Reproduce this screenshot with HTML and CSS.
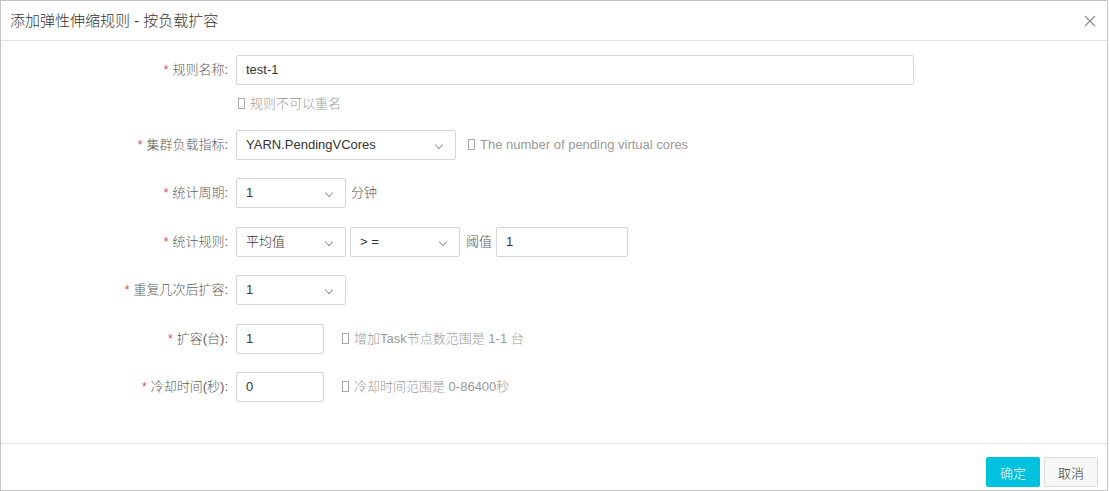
FILE: index.html
```html
<!DOCTYPE html>
<html lang="zh-CN">
<head>
  <meta charset="UTF-8">
  <title>添加弹性伸缩规则</title>
  <link rel="stylesheet" href="styles.css">
</head>
<body>
  <div class="dialog">
    <header class="dialog-header">
      <span class="dialog-title">添加弹性伸缩规则 - 按负载扩容</span>
      <button class="close-button" aria-label="关闭">
        <svg width="12" height="12" viewBox="0 0 12 12"><path d="M1 1 L11 11 M11 1 L1 11" stroke="#8c8c8c" stroke-width="1.2" fill="none"/></svg>
      </button>
    </header>

    <section class="dialog-body">
      <div class="form-row with-help">
        <label class="form-label"><span class="required">*</span>规则名称:</label>
        <div class="form-control">
          <div class="text-input name-input">test-1</div>
          <div class="help-block"><i class="help-icon"></i>规则不可以重名</div>
        </div>
      </div>

      <div class="form-row">
        <label class="form-label"><span class="required">*</span>集群负载指标:</label>
        <div class="select metric-select">YARN.PendingVCores<span class="chevron"></span></div>
        <span class="help-inline metric-help"><i class="help-icon"></i>The number of pending virtual cores</span>
      </div>

      <div class="form-row">
        <label class="form-label"><span class="required">*</span>统计周期:</label>
        <div class="select small-select">1<span class="chevron"></span></div>
        <span class="unit">分钟</span>
      </div>

      <div class="form-row">
        <label class="form-label"><span class="required">*</span>统计规则:</label>
        <div class="select small-select">平均值<span class="chevron"></span></div>
        <div class="select small-select next-select">&gt; =<span class="chevron"></span></div>
        <span class="unit threshold-label">阈值</span>
        <div class="text-input threshold-input">1</div>
      </div>

      <div class="form-row">
        <label class="form-label"><span class="required">*</span>重复几次后扩容:</label>
        <div class="select small-select">1<span class="chevron"></span></div>
      </div>

      <div class="form-row">
        <label class="form-label"><span class="required">*</span>扩容(台):</label>
        <div class="text-input short-input">1</div>
        <span class="help-inline"><i class="help-icon"></i>增加Task节点数范围是 1-1 台</span>
      </div>

      <div class="form-row">
        <label class="form-label"><span class="required">*</span>冷却时间(秒):</label>
        <div class="text-input short-input">0</div>
        <span class="help-inline"><i class="help-icon"></i>冷却时间范围是 0-86400秒</span>
      </div>
    </section>

    <footer class="dialog-footer">
      <button class="btn btn-primary">确定</button>
      <button class="btn btn-default">取消</button>
    </footer>
  </div>
</body>
</html>
```

FILE: styles.css
```css
body {
  margin: 0;
  padding: 0;
  background-color: #fff;
  font-family: "Liberation Sans", "Noto Sans CJK SC", sans-serif;
  font-size: 13px;
  font-weight: 300;
  color: #333;
}
.dialog {
  width: 1108px;
  height: 491px;
  box-sizing: border-box;
  border: 1px solid #c4c4c4;
  display: flex;
  flex-direction: column;
}
.dialog-header {
  height: 39px;
  border-bottom: 1px solid #e3e3e3;
  display: flex;
  align-items: center;
  justify-content: space-between;
  padding: 0 9px;
}
.dialog-title {
  font-size: 15px;
  color: #333;
  line-height: 20px;
}
.close-button {
  border: none;
  background: none;
  padding: 0;
  margin-right: 2px;
  width: 12px;
  height: 12px;
  display: flex;
  cursor: pointer;
}
.dialog-body {
  flex: 1;
  padding-top: 14px;
}
.form-row {
  display: flex;
  align-items: flex-start;
  margin-bottom: 18.4px;
}
.form-row.with-help {
  margin-bottom: 17px;
}
.form-label {
  width: 227px;
  margin-right: 8px;
  text-align: right;
  line-height: 30px;
  color: #5c5c5c;
  white-space: nowrap;
}
.required {
  color: #e64552;
  font-size: 12px;
  margin-right: 4px;
}
.text-input,
.select {
  height: 30px;
  box-sizing: border-box;
  border: 1px solid #d6d6d6;
  border-radius: 2px;
  padding: 0 9px;
  line-height: 28px;
  color: #333;
  background: #fff;
  white-space: nowrap;
}
.name-input {
  width: 678px;
}
.short-input {
  width: 88px;
}
.threshold-input {
  width: 132px;
}
.select {
  position: relative;
}
.chevron {
  position: absolute;
  right: 13px;
  top: 11px;
  width: 5px;
  height: 5px;
  border-right: 1px solid #9a9a9a;
  border-bottom: 1px solid #9a9a9a;
  transform: rotate(45deg);
}
.metric-select {
  width: 220px;
}
.small-select {
  width: 110px;
}
.next-select {
  margin-left: 4px;
}
.unit {
  line-height: 30px;
  margin-left: 5px;
  color: #555;
}
.threshold-label {
  margin-left: 6px;
  margin-right: 4px;
}
.help-block {
  margin-top: 10px;
  line-height: 18px;
  color: #999;
  padding-left: 2px;
}
.help-inline {
  line-height: 30px;
  color: #999;
  margin-left: 18px;
}
.metric-help {
  margin-left: 12px;
}
.help-icon {
  display: inline-block;
  width: 5px;
  height: 9px;
  border: 1px solid #a8a8a8;
  margin-right: 5px;
  vertical-align: -1px;
}
.dialog-footer {
  border-top: 1px solid #e3e3e3;
  padding: 13px 9px 3px 0;
  display: flex;
  justify-content: flex-end;
  gap: 4px;
}
.btn {
  height: 30px;
  padding: 0 13px;
  font-family: "Liberation Sans", "Noto Sans CJK SC", sans-serif;
  font-size: 13px;
  font-weight: 300;
  border-radius: 2px;
  cursor: pointer;
}
.btn-primary {
  background-color: #00c1de;
  border: 1px solid #00c1de;
  color: #fff;
}
.btn-default {
  background-color: #f7f7f7;
  border: 1px solid #dcdcdc;
  color: #333;
}
```
